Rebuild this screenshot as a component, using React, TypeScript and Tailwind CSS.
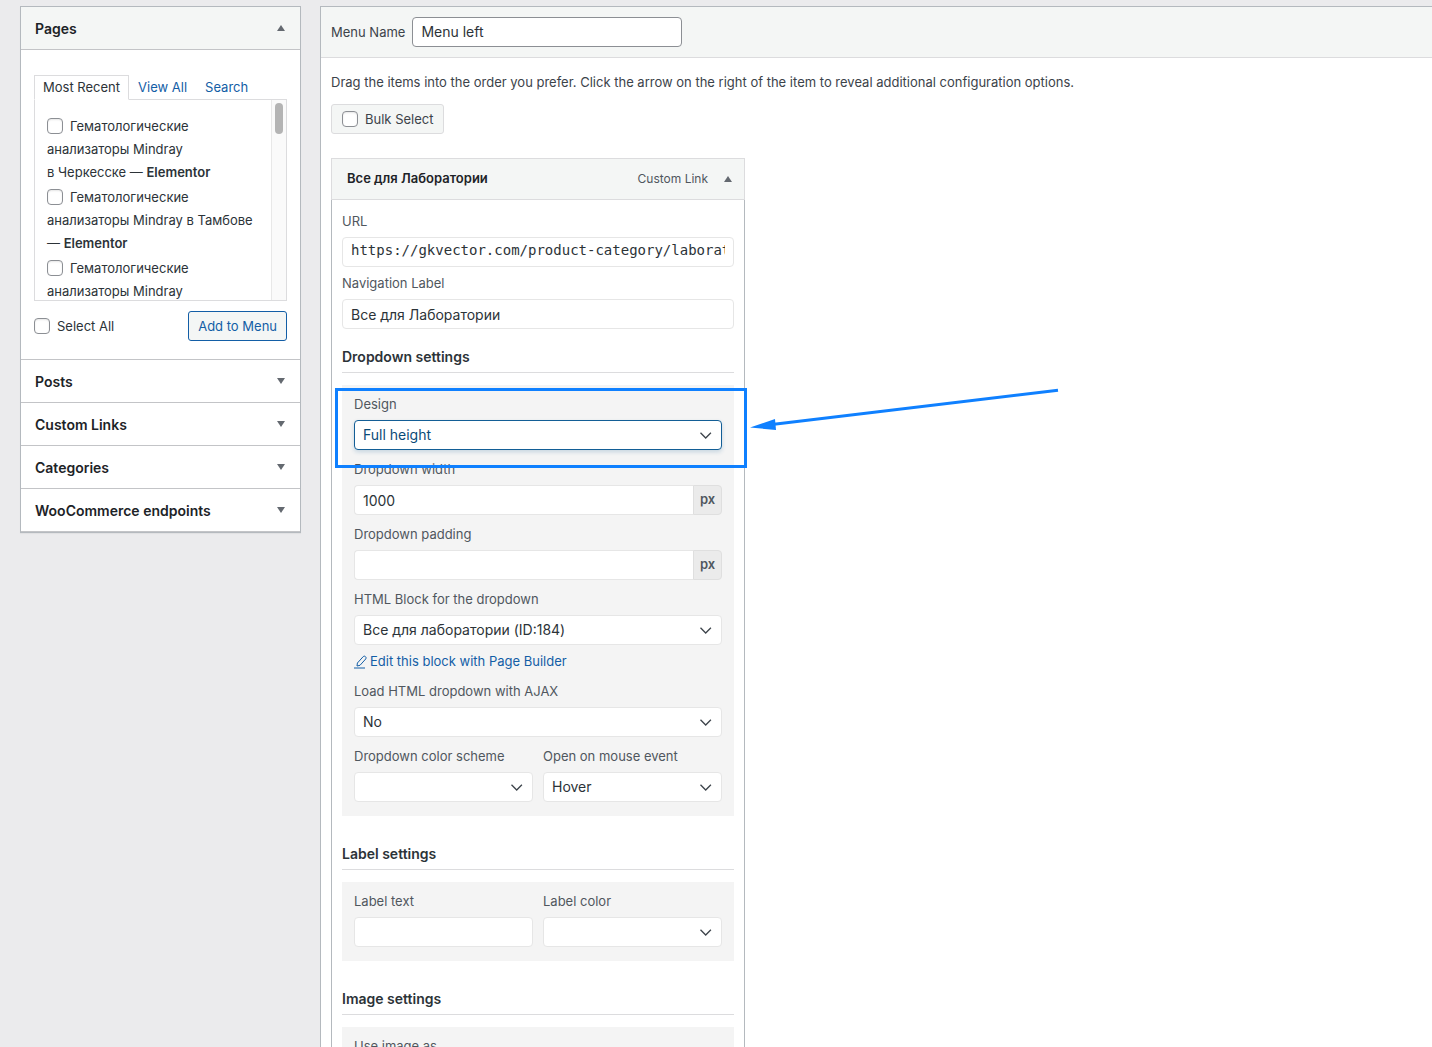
import React, { useState } from 'react';

const inputBase = 'h-[30px] w-full rounded-[4px] border bg-white px-2 text-[14px] outline-none';

function Triangle({ up = false }: { up?: boolean }) {
  return (
    <svg width="8" height="6" viewBox="0 0 8 6" className="shrink-0 fill-[#646970]" aria-hidden="true">
      {up ? <path d="M4 0 8 6H0z" /> : <path d="M0 0h8L4 6z" />}
    </svg>
  );
}

function Checkbox({ id }: { id: string }) {
  return (
    <input
      id={id}
      type="checkbox"
      className="size-4 shrink-0 appearance-none rounded-[4px] border border-[#8c8f94] bg-white shadow-[inset_0_1px_2px_rgba(0,0,0,0.1)] checked:bg-[#2271b1]"
    />
  );
}

function Field({ id, label, children }: { id: string; label: string; children: React.ReactNode }) {
  return (
    <div className="min-w-0 flex-1">
      <label htmlFor={id} className="mb-[5px] block text-[13px] leading-[21px] text-[#50575e]">{label}</label>
      {children}
    </div>
  );
}

function Select({ id, options, active = false }: { id: string; options: string[]; active?: boolean }) {
  return (
    <div className="relative">
      <select
        id={id}
        className={`${inputBase} block appearance-none pb-px ${active ? 'border-[#135e96] text-[#0a4b78] shadow-[0_2px_4px_rgba(19,94,150,0.2)]' : 'border-[#e6e6e6] text-[#2c3338]'}`}
      >
        {options.map(o => <option key={o}>{o}</option>)}
      </select>
      <svg width="12" height="7" viewBox="0 0 12 7" fill="none" className="pointer-events-none absolute top-3 right-2.5 stroke-[#3c434a]" aria-hidden="true">
        <path d="M.5.8 5.7 6 10.9.8" strokeWidth="1.3" />
      </svg>
    </div>
  );
}

function PxInput({ id, value }: { id: string; value: string }) {
  return (
    <div className="flex h-[30px]">
      <input id={id} defaultValue={value} className="h-full min-w-0 flex-1 rounded-l-[4px] border border-r-0 border-[#e6e6e6] bg-white px-2 text-[14px] text-[#2c3338] outline-none" />
      <span className="flex w-[29px] items-center justify-center rounded-r-[4px] border border-[#dfdfdf] bg-[#ebebeb] text-[13px] font-semibold text-[#50575e]">px</span>
    </div>
  );
}

function Section({ title, children }: { title: string; children: React.ReactNode }) {
  return (
    <section>
      <h4 className="mb-3 border-b border-[#dcdcde] pb-[5px] text-[14px] leading-5 font-semibold text-[#2c3338]">{title}</h4>
      <div className="flex flex-col gap-[9px] bg-[#f4f4f4] px-3 pt-[9px] pb-[14px]">{children}</div>
    </section>
  );
}

// blue frame with an arrow coming in from the right
function Highlight() {
  return (
    <div className="pointer-events-none absolute -top-1.5 -right-[25px] -bottom-[18px] -left-[19px] z-10 border-3 border-[#0f80ff]">
      <svg width="308" height="43" viewBox="0 0 308 43" className="absolute top-0 left-full ml-1.5 max-w-none overflow-visible" aria-hidden="true">
        <path d="M24 33.2 308-.8" stroke="#0f80ff" strokeWidth="3" />
        <path d="M0 36.5 25 28 26 39z" fill="#0f80ff" />
      </svg>
    </div>
  );
}

const pages = [
  { text: 'Гематологические анализаторы Mindray в\u00a0Черкесске', state: 'Elementor' },
  { text: 'Гематологические анализаторы Mindray в Тамбове', state: 'Elementor' },
  { text: 'Гематологические анализаторы Mindray', state: '' },
];

function PagesPanel() {
  const [tab, setTab] = useState('Most Recent');
  return (
    <div className="border-b border-[#c3c4c7] px-[13px] pt-[25px] pb-[18px]">
      <div className="relative z-10 -mb-px flex">
        {['Most Recent', 'View All', 'Search'].map(t => (
          <button
            key={t}
            onClick={() => setTab(t)}
            className={`h-[25px] border px-2 text-[13px] ${tab === t ? 'border-[#dcdcde] border-b-white bg-white text-[#2c3338]' : 'border-transparent text-[#135ea6]'}`}
          >
            {t}
          </button>
        ))}
      </div>
      <div className="flex h-[202px] border border-[#dcdcde]">
        <ul className="flex min-w-0 flex-1 flex-col gap-0.5 overflow-hidden px-3 pt-[15px] text-[13px] leading-[23px] text-[#2c3338]">
          {pages.map((p, i) => (
            <li key={i} className="shrink-0">
              <label htmlFor={`page-${i}`}>
                <span className="mr-[7px] inline-flex align-[-3px]"><Checkbox id={`page-${i}`} /></span>
                {p.text}
                {p.state && <> — <b className="font-semibold">{p.state}</b></>}
              </label>
            </li>
          ))}
        </ul>
        <div className="w-[15px] border-l border-[#e8e8e8] bg-[#fafafa] px-[3px] pt-[3px]">
          <div className="h-[31px] rounded-full bg-[#b4b4b4]" />
        </div>
      </div>
      <div className="mt-2.5 flex items-center justify-between">
        <label htmlFor="select-all" className="flex items-center gap-[7px] text-[13px] leading-[21px] text-[#2c3338]">
          <Checkbox id="select-all" /> Select All
        </label>
        <button className="h-[30px] rounded-[3px] border border-[#135ea6] bg-[#f4f6f5] px-[9px] text-[13px] leading-[21px] text-[#135ea6]">Add to Menu</button>
      </div>
    </div>
  );
}

export default function App() {
  return (
    <div className="flex h-screen items-start gap-[19px] overflow-hidden bg-[#ebebed] pt-1.5 pl-5 font-['Inter','Liberation_Sans',sans-serif] text-[#3c434a]">
      <aside className="w-[281px] shrink-0 border border-[#b4b9be] bg-white shadow-[0_1px_1px_rgba(0,0,0,0.04)]">
        <button className="flex h-[43px] w-full items-center justify-between border-b border-[#c3c4c7] bg-[#f4f6f5] pr-[15px] pl-3.5 text-[14px] font-semibold text-[#1d2327]">
          Pages <Triangle up />
        </button>
        <PagesPanel />
        {['Posts', 'Custom Links', 'Categories', 'WooCommerce endpoints'].map(name => (
          <button key={name} className="flex h-[43px] w-full items-center justify-between border-b border-[#c3c4c7] pr-[15px] pl-3.5 text-[14px] font-semibold text-[#1d2327]">
            {name} <Triangle />
          </button>
        ))}
      </aside>

      <main className="min-h-screen min-w-0 flex-1 border-t border-l border-[#b4b9be] bg-white">
        <div className="flex items-center gap-[7px] border-b border-[#dcdcde] bg-[#f4f6f5] p-2.5">
          <label htmlFor="menu-name" className="text-[13px] leading-[21px]">Menu Name</label>
          <input id="menu-name" defaultValue="Menu left" className="h-[30px] w-[270px] rounded-[4px] border border-[#8c8f94] bg-white px-2 pb-0.5 text-[14px] text-[#2c3338] outline-none" />
        </div>

        <div className="px-2.5 pt-3.5">
          <p className="text-[13px] leading-5">Drag the items into the order you prefer. Click the arrow on the right of the item to reveal additional configuration options.</p>
          <label htmlFor="bulk-select" className="mt-3 flex h-[30px] w-fit items-center gap-[7px] rounded-[3px] border border-[#dcdcde] bg-[#f4f6f5] px-2.5 text-[13px] leading-[21px]">
            <Checkbox id="bulk-select" /> Bulk Select
          </label>

          <div className="mt-6 w-[414px] max-w-full">
            <div className="flex h-[42px] items-center border border-[#dcdcde] bg-[#f4f6f5] pr-3 pl-[15px]">
              <h3 className="flex-1 text-[13px] font-semibold text-[#1d2327]">Все для Лаборатории</h3>
              <span className="mr-4 text-[12px] text-[#50575e]">Custom Link</span>
              <button aria-label="Toggle item"><Triangle up /></button>
            </div>
            <div className="border-x border-[#b4b9be] px-2.5 pt-[11px] pb-10">
              <div className="mb-[18px] flex flex-col gap-1.5">
                <Field id="url" label="URL">
                  <input id="url" defaultValue="https://gkvector.com/product-category/laborat" className={`${inputBase} block border-[#e6e6e6] pb-1 font-['DejaVu_Sans_Mono',monospace] text-[#2c3338]`} />
                </Field>
                <Field id="nav-label" label="Navigation Label">
                  <input id="nav-label" defaultValue="Все для Лаборатории" className={`${inputBase} block border-[#e6e6e6] text-[#2c3338]`} />
                </Field>
              </div>

              <div className="flex flex-col gap-7">
                <Section title="Dropdown settings">
                  <div className="relative">
                    <Field id="design" label="Design">
                      <Select id="design" options={['Full height', 'Default']} active />
                    </Field>
                    <Highlight />
                  </div>
                  <Field id="width" label="Dropdown width"><PxInput id="width" value="1000" /></Field>
                  <Field id="padding" label="Dropdown padding"><PxInput id="padding" value="" /></Field>
                  <Field id="block" label="HTML Block for the dropdown">
                    <Select id="block" options={['Все для лаборатории (ID:184)']} />
                    <a href="#edit" className="mt-1.5 flex items-center gap-[3px] text-[13px] leading-[21px] text-[#135ea6]">
                      <svg width="13" height="14" viewBox="0 0 13 14" fill="none" stroke="currentColor" aria-hidden="true">
                        <path d="M3 11 3.4 8 9.3 1.5Q10.2.6 11.4 1.6T11.8 3.9L6 10.3z" strokeWidth="1" />
                        <path d="M0 13h11" strokeWidth="1" />
                      </svg>
                      Edit this block with Page Builder
                    </a>
                  </Field>
                  <Field id="ajax" label="Load HTML dropdown with AJAX"><Select id="ajax" options={['No', 'Yes']} /></Field>
                  <div className="flex gap-2.5">
                    <Field id="scheme" label="Dropdown color scheme"><Select id="scheme" options={['', 'Light', 'Dark']} /></Field>
                    <Field id="event" label="Open on mouse event"><Select id="event" options={['Hover', 'Click']} /></Field>
                  </div>
                </Section>

                <Section title="Label settings">
                  <div className="flex gap-2.5">
                    <Field id="label-text" label="Label text"><input id="label-text" className={`${inputBase} block border-[#e6e6e6] text-[#2c3338]`} /></Field>
                    <Field id="label-color" label="Label color"><Select id="label-color" options={['', 'Red', 'Green']} /></Field>
                  </div>
                </Section>

                <Section title="Image settings">
                  <Field id="image-as" label="Use image as"><Select id="image-as" options={['Image', 'Icon']} /></Field>
                </Section>
              </div>
            </div>
          </div>
        </div>
      </main>
    </div>
  );
}
